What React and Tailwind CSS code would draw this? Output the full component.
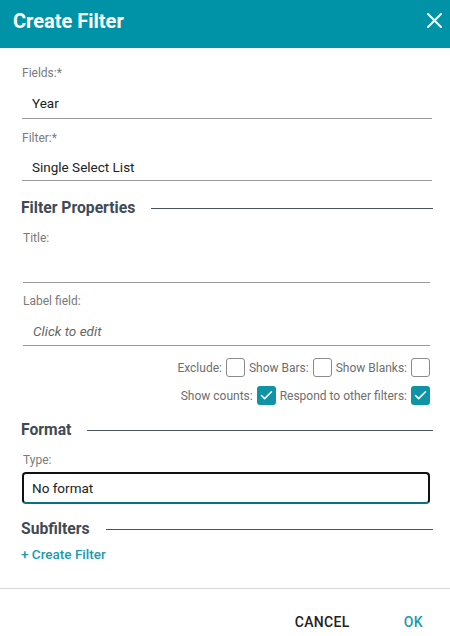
import React from 'react'
import { Check } from 'lucide-react'

const font = { fontFamily: 'Roboto, "Liberation Sans", sans-serif' }

function Box({ checked }) {
  return checked ? (
    <span className="w-[19px] h-[19px] rounded-[3px] bg-[#0f94a6] flex items-center justify-center">
      <Check size={15} strokeWidth={2.5} className="text-white" />
    </span>
  ) : (
    <span className="w-[19px] h-[19px] rounded-[3px] border border-[#8a8a8a] bg-white" />
  )
}

function Opt({ label, checked }) {
  return (
    <label className="flex items-center gap-[4px]">
      <span className="text-[12px] text-[#6e6e6e]">{label}</span>
      <Box checked={checked} />
    </label>
  )
}

function Heading({ children, className }) {
  return (
    <div className={`flex items-center gap-4 pr-[17px] -ml-px ${className}`}>
      <h3 className="text-[15.7px] leading-5 font-bold text-[#3f4a55] whitespace-nowrap">{children}</h3>
      <div className="flex-1 h-px bg-[#4a545e]" />
    </div>
  )
}

function Label({ children }) {
  return <div className="text-[12px] text-[#7a7a7a] leading-4">{children}</div>
}

export default function App() {
  return (
    <div className="w-[450px] h-[636px] bg-white flex flex-col overflow-hidden" style={font}>
      <div className="h-[48px] shrink-0 bg-[#0093a8] flex items-start justify-between pl-[13px] pr-[8px] pt-[7px]">
        <h2 className="text-[20px] leading-7 font-bold text-white">Create Filter</h2>
        <svg width="15" height="15" viewBox="0 0 15 15" className="mt-[6px]">
          <path d="M1 1L14 14M14 1L1 14" stroke="white" strokeWidth="2" strokeLinecap="round" />
        </svg>
      </div>

      <div className="flex-1 min-h-0 pl-[22px] pt-[17px]">
        <div className="pr-[18px]">
          <Label>Fields:*</Label>
          <div className="pt-[12px] pb-[5px] border-b border-[#9a9a9a] pl-[10px]">
            <div className="text-[13.5px] leading-5 text-[#222]">Year</div>
          </div>
        </div>

        <div className="pr-[18px] mt-[11px]">
          <Label>Filter:*</Label>
          <div className="pt-[11px] pb-[3px] border-b border-[#9a9a9a] pl-[10px]">
            <div className="text-[13.5px] leading-5 text-[#222]">Single Select List</div>
          </div>
        </div>

        <Heading className="mt-[17px]">Filter Properties</Heading>

        <div className="mt-[12px] pl-px pr-[20px]">
          <Label>Title:</Label>
          <div className="h-[37px] border-b border-[#9a9a9a]" />
        </div>

        <div className="mt-[10px] pl-px pr-[20px]">
          <Label>Label field:</Label>
          <div className="pt-[12px] pb-[4px] border-b border-[#9a9a9a] pl-[10px]">
            <div className="text-[13.5px] leading-5 italic text-[#666]">Click to edit</div>
          </div>
        </div>

        <div className="mt-[12px] flex flex-col items-end gap-[9px] pr-[20px]">
          <div className="flex items-center gap-[4px]">
            <Opt label="Exclude:" />
            <Opt label="Show Bars:" />
            <Opt label="Show Blanks:" />
          </div>
          <div className="flex items-center gap-[4px]">
            <Opt label="Show counts:" checked />
            <Opt label="Respond to other filters:" checked />
          </div>
        </div>

        <Heading className="mt-[15px]">Format</Heading>

        <div className="mt-[12px] pr-[20px]">
          <div className="pl-px">
            <Label>Type:</Label>
          </div>
          <div className="mt-[4px] h-[32px] border-2 border-[#111] border-b-[#0b6f80] rounded-[4px] flex items-center pl-[8px]">
            <span className="text-[13.5px] text-[#222]">No format</span>
          </div>
        </div>

        <Heading className="mt-[15px]">Subfilters</Heading>

        <div className="mt-[3px] -ml-px">
          <span className="text-[13.5px] leading-5 font-medium text-[#1a9aae]">+ Create Filter</span>
        </div>
      </div>

      <div className="h-[48px] shrink-0 border-t border-[#d8d8d8] flex items-start justify-end gap-[54px] pr-[27px] pt-[23px]">
        <span className="text-[14px] leading-5 font-medium text-[#222] tracking-wide">CANCEL</span>
        <span className="text-[14px] leading-5 font-medium text-[#1a9aae] tracking-wide">OK</span>
      </div>
    </div>
  )
}
